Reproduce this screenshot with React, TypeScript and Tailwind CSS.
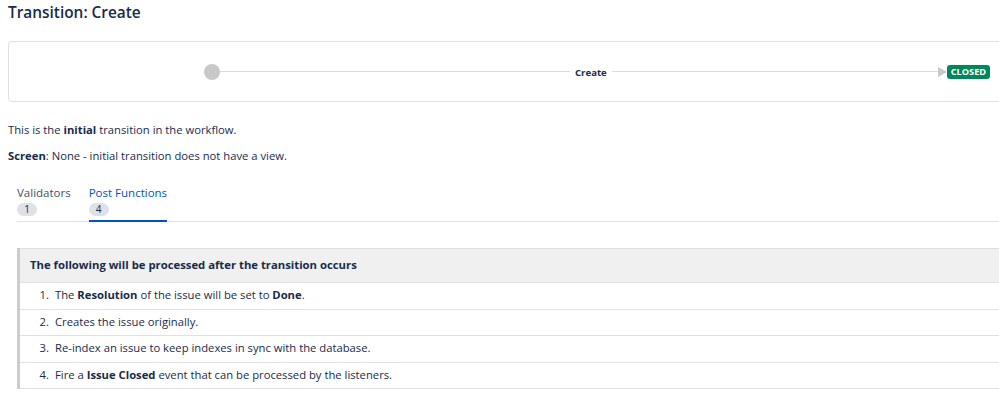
import React from "react";

type Step = {
  parts: { text: string; bold?: boolean }[];
};

const steps: Step[] = [
  {
    parts: [
      { text: "The " },
      { text: "Resolution", bold: true },
      { text: " of the issue will be set to " },
      { text: "Done", bold: true },
      { text: "." },
    ],
  },
  { parts: [{ text: "Creates the issue originally." }] },
  { parts: [{ text: "Re-index an issue to keep indexes in sync with the database." }] },
  {
    parts: [
      { text: "Fire a " },
      { text: "Issue Closed", bold: true },
      { text: " event that can be processed by the listeners." },
    ],
  },
];

export default function App() {
  return (
    <div className="w-full min-h-[395px] overflow-hidden bg-white text-[#172b4d] font-['Open_Sans',sans-serif]">
      <div className="w-[1030px] pl-2 pt-[1px]">
        <h1 className="text-[15.4px] font-semibold leading-[24px]">Transition: Create</h1>

        {/* workflow diagram */}
        <div className="mt-[16px] h-[61px] border border-[#e1e1e1] rounded-[4px] flex items-center pl-[195px]">
          <div className="w-4 h-4 rounded-full bg-[#c8c8c8]" />
          <div className="w-[350px] h-px bg-[#dcdcdc]" />
          <span className="px-[5px] text-[9.6px] font-bold leading-none text-[#172b4d] mt-[2px]">Create</span>
          <div className="w-[326px] h-px bg-[#dcdcdc]" />
          <svg width="9" height="10" viewBox="0 0 9 10" className="block">
            <path d="M0 0 L9 5 L0 10 Z" fill="#c8c8c8" />
          </svg>
          <span className="h-[14px] px-[4px] flex items-center rounded-[3px] bg-[#00875a] text-white text-[9.2px] font-bold leading-none">
            CLOSED
          </span>
        </div>

        <p className="mt-[20px] text-[11.25px] leading-[16px]">
          This is the <b>initial</b> transition in the workflow.
        </p>
        <p className="mt-[10px] text-[11.25px] leading-[16px]">
          <b>Screen</b>: None - initial transition does not have a view.
        </p>

        {/* tabs */}
        <div className="ml-[9px] mt-[21px] flex gap-[18px] border-b border-[#dfe1e6]">
          <div className="flex flex-col items-start pb-[5px]">
            <span className="text-[11.5px] leading-[16px] text-[#42526e]">Validators</span>
            <span className="mt-[2px] h-[13px] w-[20px] rounded-full bg-[#dfe1e6] text-[10px] leading-[13px] text-center text-[#172b4d]">1</span>
          </div>
          <div className="flex flex-col items-start pb-[3px] border-b-2 border-[#0052cc] -mb-px">
            <span className="text-[11.5px] leading-[16px] text-[#0052cc]">Post Functions</span>
            <span className="mt-[2px] h-[13px] w-[20px] rounded-full bg-[#dfe1e6] text-[10px] leading-[13px] text-center text-[#172b4d]">4</span>
          </div>
        </div>

        {/* post functions table */}
        <div className="ml-[9px] mt-[26px] border-l-[3px] border-[#cccccc]">
          <div className="h-[35px] bg-[#f0f0f0] border-y border-[#e0e0e0] flex items-center pl-[10px] text-[11.3px] font-bold">
            The following will be processed after the transition occurs
          </div>
          <ol>
            {steps.map((s, i) => (
              <li key={i} className="h-[26.5px] border-b border-[#e0e0e0] flex items-center text-[11.25px] text-[#172b4d]">
                <span className="w-[35px] text-right pr-[6px]">{i + 1}.</span>
                <span>
                  {s.parts.map((p, j) =>
                    p.bold ? <b key={j}>{p.text}</b> : <React.Fragment key={j}>{p.text}</React.Fragment>
                  )}
                </span>
              </li>
            ))}
          </ol>
        </div>
      </div>
    </div>
  );
}
